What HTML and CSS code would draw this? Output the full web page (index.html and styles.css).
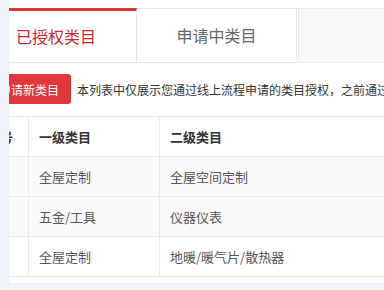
FILE: index.html
```html
<!DOCTYPE html>
<html lang="zh-cn">
<head>
<meta charset="UTF-8">
<meta name="viewport" content="width=device-width, initial-scale=1.0">
<title>类目管理</title>
<link rel="stylesheet" href="styles.css">
</head>
<body>
  <div class="page">
    <div class="panel">
      <div class="tabs">
        <div class="tab tab-active">已授权类目</div>
        <div class="tab">申请中类目</div>
        <div class="tab-rest"></div>
      </div>
      <div class="tab-body">
        <div class="scroll">
          <div class="toolbar">
            <button class="btn-apply">申请新类目</button>
            <span class="tip">本列表中仅展示您通过线上流程申请的类目授权，之前通过线下方式申请的类目授权请联系客服查询</span>
          </div>
          <table class="cat-table">
            <thead>
              <tr>
                <th class="col-no">序号</th>
                <th class="col-first">一级类目</th>
                <th>二级类目</th>
              </tr>
            </thead>
            <tbody>
              <tr class="row-gray">
                <td>1</td>
                <td>全屋定制</td>
                <td>全屋空间定制</td>
              </tr>
              <tr class="row-gray">
                <td>2</td>
                <td>五金/工具</td>
                <td>仪器仪表</td>
              </tr>
              <tr>
                <td>3</td>
                <td>全屋定制</td>
                <td>地暖/暖气片/散热器</td>
              </tr>
            </tbody>
          </table>
        </div>
      </div>
    </div>
  </div>
</body>
</html>
```

FILE: styles.css
```css
body {
  margin: 0;
  background-color: #eff3f8;
  font-family: "Noto Sans CJK SC", "Liberation Sans", sans-serif;
  color: #555;
}
.page {
  padding: 0 0 9px 9px;
}
.panel {
  background-color: #fff;
  padding-top: 8px;
  padding-bottom: 6px;
  overflow: hidden;
}
.tabs {
  display: flex;
  height: 53px;
  border-top: 1px solid #e8e8e8;
  border-bottom: 1px solid #e8e8e8;
}
.tab {
  width: 160px;
  box-sizing: border-box;
  border-right: 1px solid #e8e8e8;
  text-align: center;
  font-size: 16px;
  line-height: 53px;
  color: #666;
}
.tab-active {
  width: 128px;
  margin-top: -1px;
  border-top: 3px solid #d9383a;
  padding-right: 33px;
  line-height: 51px;
  color: #c8262b;
}
.tab-rest {
  flex: 1;
  margin-left: 1px;
  border-left: 1px solid #e8e8e8;
  background-color: #f7f7f7;
}
.tab-body {
  overflow: hidden;
}
.scroll {
  margin-left: -33px;
  width: 700px;
}
.toolbar {
  display: flex;
  align-items: center;
  margin: 11px 0 0 11px;
  white-space: nowrap;
}
.btn-apply {
  height: 30px;
  padding: 0 12px;
  border: none;
  border-radius: 3px;
  background-color: #e0383a;
  color: #fff;
  font-family: inherit;
  font-size: 12px;
}
.tip {
  margin-left: 6px;
  font-size: 12px;
  color: #333;
}
.cat-table {
  margin-top: 12px;
  width: 680px;
  border-collapse: collapse;
  font-size: 13px;
}
.cat-table th,
.cat-table td {
  height: 39px;
  padding: 0 10px;
  border: 1px solid #ebebeb;
  text-align: left;
}
.cat-table th {
  color: #333;
  font-weight: bold;
  font-size: 13px;
}
.cat-table td {
  color: #555;
}
.cat-table .col-no {
  width: 31px;
}
.cat-table .col-first {
  width: 110px;
}
.row-gray {
  background-color: #fafafa;
}
```
